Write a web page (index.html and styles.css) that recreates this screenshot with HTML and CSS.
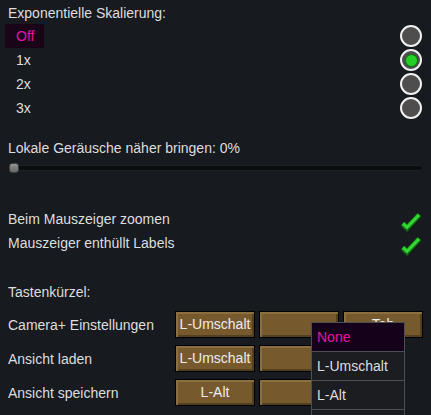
FILE: index.html
```html
<!DOCTYPE html>
<html lang="de">
<head>
<meta charset="utf-8">
<link rel="stylesheet" href="styles.css">
</head>
<body>
<div class="page">
  <div class="title">Exponentielle Skalierung:</div>
  <div class="options">
    <div class="opt-row"><span class="opt selected">Off</span><span class="radio"></span></div>
    <div class="opt-row"><span class="opt">1x</span><span class="radio on"><span class="dot"></span></span></div>
    <div class="opt-row"><span class="opt">2x</span><span class="radio"></span></div>
    <div class="opt-row"><span class="opt">3x</span><span class="radio"></span></div>
  </div>

  <div class="slider-block">
    <div class="line">Lokale Geräusche näher bringen: 0%</div>
    <div class="slider">
      <div class="track"></div>
      <div class="thumb"></div>
    </div>
  </div>

  <div class="checks">
    <div class="check-row"><span>Beim Mauszeiger zoomen</span>
      <svg class="tick" width="22" height="22" viewBox="0 0 22 22"><polyline points="2.5,12.5 7,17 19.5,3.5" fill="none" stroke="#0d6a0d" stroke-width="5.5" stroke-linejoin="miter"/><polyline points="3,12.5 7,16.3 19,3.8" fill="none" stroke="#33d633" stroke-width="3.2"/></svg>
    </div>
    <div class="check-row"><span>Mauszeiger enthüllt Labels</span>
      <svg class="tick" width="22" height="22" viewBox="0 0 22 22"><polyline points="2.5,12.5 7,17 19.5,3.5" fill="none" stroke="#0d6a0d" stroke-width="5.5" stroke-linejoin="miter"/><polyline points="3,12.5 7,16.3 19,3.8" fill="none" stroke="#33d633" stroke-width="3.2"/></svg>
    </div>
  </div>

  <div class="line section">Tastenkürzel:</div>
  <div class="hotkeys">
    <span class="hk-label">Camera+ Einstellungen</span>
    <span class="btn">L-Umschalt</span>
    <span class="btn"></span>
    <span class="btn">Tab</span>

    <span class="hk-label">Ansicht laden</span>
    <span class="btn">L-Umschalt</span>
    <span class="btn"></span>
    <span class="empty"></span>

    <span class="hk-label">Ansicht speichern</span>
    <span class="btn">L-Alt</span>
    <span class="btn"></span>
    <span class="empty"></span>

    <div class="dropdown">
      <div class="dd-item active">None</div>
      <div class="dd-item">L-Umschalt</div>
      <div class="dd-item">L-Alt</div>
      <div class="dd-item"></div>
    </div>
  </div>
</div>
</body>
</html>
```
FILE: styles.css
```css
html, body {
  margin: 0;
  padding: 0;
  background: #171a1f;
  height: 415px;
  overflow: hidden;
}
body {
  font-family: "Liberation Sans", Arial, sans-serif;
  font-size: 14px;
  color: #dedede;
}
.page {
  padding: 0 8px;
}
.title {
  padding-top: 3px;
  line-height: 21px;
}
.options {
  display: flex;
  flex-direction: column;
}
.opt-row {
  height: 24px;
  display: flex;
  align-items: center;
  justify-content: space-between;
}
.opt {
  margin-left: -3px;
  width: 39px;
  box-sizing: border-box;
  padding-left: 11px;
  line-height: 24px;
  height: 24px;
}
.opt.selected {
  background: #1a0418;
  color: #e414a6;
}
.radio {
  width: 22px;
  height: 22px;
  box-sizing: border-box;
  border: 2px solid #f0f0f0;
  border-radius: 50%;
  background: #4e4e4e;
  margin-right: 1px;
  display: flex;
  align-items: center;
  justify-content: center;
}
.dot {
  width: 13px;
  height: 13px;
  box-sizing: border-box;
  border-radius: 50%;
  background: #25d025;
  border: 1px solid #0f6f0f;
}
.slider-block {
  margin-top: 16px;
}
.line {
  line-height: 24px;
}
.slider {
  position: relative;
  margin-top: 3px;
  height: 10px;
  display: flex;
  align-items: center;
}
.track {
  flex: 1;
  height: 6px;
  border-radius: 3px;
  background: #0b0c0e;
  box-shadow: inset 0 0 0 1px #1e2125;
}
.thumb {
  position: absolute;
  left: 1px;
  top: 0;
  width: 10px;
  height: 10px;
  box-sizing: border-box;
  border-radius: 3px;
  border: 1px solid #3f3f3f;
  background: linear-gradient(#9a9a9a 0%, #7a7a7a 45%, #555 50%, #7a7a7a 55%, #6a6a6a 100%);
}
.checks {
  margin-top: 34px;
}
.check-row {
  height: 24px;
  line-height: 24px;
  display: flex;
  justify-content: space-between;
  align-items: center;
}
.tick {
  margin-right: 1px;
  margin-top: 5px;
}
.section {
  margin-top: 25px;
}
.hotkeys {
  position: relative;
  margin-top: 7px;
  display: grid;
  grid-template-columns: 163px 80px 80px 80px;
  grid-auto-rows: 27px;
  column-gap: 4px;
  row-gap: 7px;
}
.hk-label {
  align-self: center;
  line-height: 18px;
}
.btn {
  box-sizing: border-box;
  border: 1px solid #000;
  background: #765a2e;
  box-shadow: inset 2px 2px 0 #8c6f3e, inset -2px -2px 0 #52401f;
  color: #ececec;
  text-align: center;
  line-height: 25px;
  white-space: nowrap;
}
.dropdown {
  position: absolute;
  left: 303px;
  top: 11px;
  width: 94px;
  height: 93px;
  overflow: hidden;
  box-sizing: border-box;
  border: 1px solid #4b4e53;
  border-bottom: none;
  background: #1b1d21;
}
.dd-item {
  height: 28px;
  line-height: 28px;
  padding-left: 5px;
  border-bottom: 1px solid #4b4e53;
  color: #dedede;
}
.dd-item.active {
  background: #16011a;
  color: #e414a6;
}
```
